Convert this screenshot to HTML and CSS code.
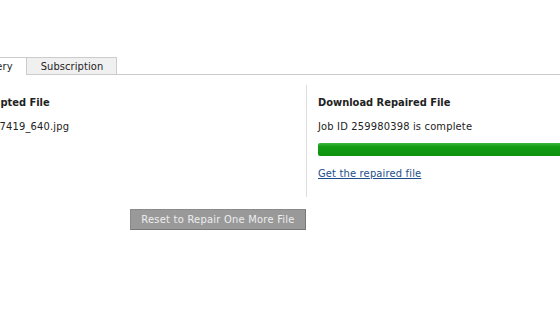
FILE: index.html
```html
<!DOCTYPE html>
<html lang="en">
<head>
    <meta charset="UTF-8">
    <title>File Repair</title>
    <link rel="stylesheet" href="styles.css">
</head>
<body>
    <div class="page">
        <div class="tabs">
            <div class="tab active">Recovery</div>
            <div class="tab">Subscription</div>
        </div>

        <div class="columns">
            <div class="col col-left">
                <h3>Upload Corrupted File</h3>
                <p>wallpaper-1867419_640.jpg</p>
            </div>
            <div class="col col-right">
                <h3>Download Repaired File</h3>
                <p>Job ID 259980398 is complete</p>
                <div class="progress"><div class="progress-fill" style="width: 100%"></div></div>
                <a href="#" class="link">Get the repaired file</a>
            </div>
        </div>

        <div class="actions">
            <button type="button" class="btn-reset">Reset to Repair One More File</button>
        </div>
    </div>
</body>
</html>
```

FILE: styles.css
```css
body {
    font-family: "DejaVu Sans Condensed", "DejaVu Sans", Verdana, sans-serif;
    font-size: 11px;
    color: #222;
    background-color: #fff;
    margin: 0;
    overflow: hidden;
}
.page {
    margin-left: -120px;
    width: 900px;
    padding-top: 57px;
}
.tabs {
    display: flex;
    border-bottom: 1px solid #ccc;
    height: 17px;
    padding-left: 72px;
}
.tab {
    height: 17px;
    line-height: 17px;
    padding: 0 13px 0 14px;
    border: 1px solid #ccc;
    border-bottom: none;
    background-color: #f0f0f0;
    color: #222;
    box-sizing: border-box;
    letter-spacing: 0.1px;
}
.tab.active {
    height: 18px;
    padding: 0 13px;
    background-color: #fff;
    margin-right: -1px;
}
.columns {
    display: flex;
    padding-top: 10px;
}
.col {
    height: 112px;
}
.col-left {
    flex-shrink: 0;
    width: 426px;
    padding-left: 47px;
    box-sizing: border-box;
}
.col-right {
    flex: 1;
    border-left: 1px solid #ddd;
    padding-left: 11px;
}
h3 {
    font-size: 11px;
    font-weight: bold;
    margin: 11px 0 0;
    line-height: 14px;
}
p {
    margin: 10px 0 0;
    line-height: 14px;
    letter-spacing: 0.18px;
}
.progress {
    margin-top: 9px;
    height: 13px;
    width: 400px;
    background-color: #eee;
    border-radius: 2px;
    overflow: hidden;
}
.progress-fill {
    height: 100%;
    background: linear-gradient(#3cb83c, #139c13 30%, #0f920f);
}
.link {
    display: inline-block;
    margin-top: 11px;
    color: #1a4f8a;
    line-height: 14px;
    letter-spacing: 0.18px;
}
.actions {
    padding-left: 250px;
    padding-top: 12px;
}
.btn-reset {
    font-family: "DejaVu Sans Condensed", "DejaVu Sans", Verdana, sans-serif;
    font-size: 11px;
    letter-spacing: 0.25px;
    width: 176px;
    height: 21px;
    background-color: #999;
    color: #eee;
    border: 1px solid #8a8a8a;
    border-right-color: #777;
    border-bottom-color: #777;
    padding: 0;
    cursor: pointer;
}
```
